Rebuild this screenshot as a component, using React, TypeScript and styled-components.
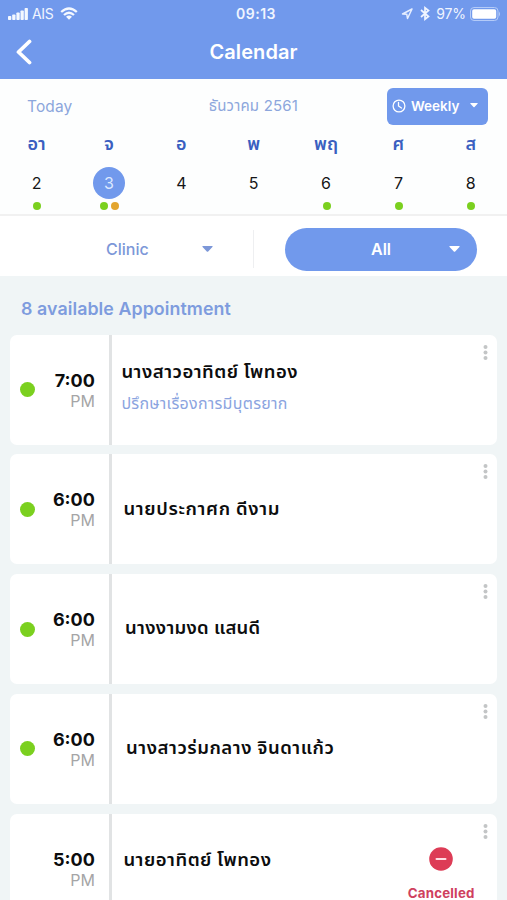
import React from "react";
import styled, { createGlobalStyle } from "styled-components";

const blue = "#7199ec";
const green = "#7bd01f";
const sans = `Inter, "Noto Sans Thai", "Noto Sans", sans-serif`;

const GlobalStyle = createGlobalStyle`
  * { box-sizing: border-box; }
  body { margin: 0; background: #f0f5f6; }
`;

const Screen = styled.div`
  width: 507px;
  height: 900px;
  overflow: hidden;
  background: #f0f5f6;
  font-family: ${sans};
  color: #0c0d0e;
`;

const Header = styled.header`
  height: 79px;
  background: ${blue};
  color: #fff;
`;

const StatusBar = styled.div`
  height: 27px;
  display: grid;
  grid-template-columns: 1fr auto 1fr;
  align-items: center;
  padding: 0 6px 0 8px;
  font-size: 14px;
  line-height: 27px;
  color: #f0f5ff;
`;

const StatusGroup = styled.div<{ $end?: boolean }>`
  display: flex;
  align-items: center;
  justify-content: ${(p) => (p.$end ? "flex-end" : "flex-start")};
`;

const Carrier = styled.span`
  margin: 0 6px 0 4px;
  letter-spacing: -0.3px;
`;

const Clock = styled.span`
  font-weight: 600;
  letter-spacing: 0.5px;
  margin-left: 3px;
`;

const Battery = styled.span`
  margin: 0 4px 0 6px;
  letter-spacing: -0.1px;
`;

const BluetoothSlot = styled.span`
  display: flex;
  margin-left: 7px;
`;

const TitleBar = styled.div`
  height: 52px;
  display: grid;
  grid-template-columns: 60px 1fr 60px;
  align-items: center;
  padding: 0 0 2px;
`;

const BackButton = styled.button`
  border: 0;
  background: none;
  padding: 0 0 0 15px;
  display: flex;
`;

const Title = styled.h1`
  margin: 0;
  text-align: center;
  font-size: 20px;
  line-height: 28px;
  font-weight: 600;
  letter-spacing: 0.1px;
`;

const Calendar = styled.section`
  height: 137px;
  background: #fdfefe;
  border-bottom: 2px solid #f1f1f1;
`;

const MonthBar = styled.div`
  height: 54px;
  display: grid;
  grid-template-columns: 1fr auto 1fr;
  align-items: center;
  padding: 0 19px 0 27px;
  color: #8ca6dc;
  font-size: 15.5px;
`;

const Today = styled.span`
  letter-spacing: 0.1px;
`;

const Month = styled.span`
  font-size: 15px;
  letter-spacing: 0.2px;
  margin-left: -8px;
`;

const RangeButton = styled.button`
  justify-self: end;
  width: 101px;
  height: 37px;
  border: 0;
  border-radius: 6px;
  background: ${blue};
  color: #fff;
  display: flex;
  align-items: center;
  padding: 0 10px 1px 5px;
  font: 600 13.5px ${sans};
`;

const RangeLabel = styled.span`
  flex: 1;
  padding-left: 5px;
  text-align: left;
  white-space: nowrap;
`;

const Week = styled.div`
  display: grid;
  grid-template-columns: repeat(7, 1fr);
  padding-left: 0.4px;
`;

const Day = styled.div`
  display: flex;
  flex-direction: column;
  align-items: center;
`;

const DayName = styled.span`
  height: 26px;
  line-height: 22px;
  font-size: 18px;
  font-weight: 600;
  color: #3a5fc0;
`;

const DayNumber = styled.span<{ $active?: boolean }>`
  width: 32px;
  height: 32px;
  margin-top: 8px;
  border-radius: 50%;
  text-align: center;
  font-size: 16px;
  line-height: 33px;
  background: ${(p) => (p.$active ? blue : "transparent")};
  color: ${(p) => (p.$active ? "#dce8ff" : "#151617")};
`;

const Dots = styled.div`
  display: flex;
  gap: 3px;
  margin: 3px 0 0 1px;
`;

const Dot = styled.i<{ $color: string }>`
  width: 8px;
  height: 8px;
  border-radius: 50%;
  background: ${(p) => p.$color};
`;

const Filters = styled.section`
  height: 60px;
  display: grid;
  grid-template-columns: 254px 1fr;
  align-items: center;
  background: #fff;
`;

const ClinicSelect = styled.div`
  height: 38px;
  margin-top: 6px;
  border-right: 1px solid #eeeff1;
  display: flex;
  align-items: center;
  justify-content: space-between;
  padding: 0 40px 0 106px;
  color: #7c97d8;
  font-size: 16px;
  font-weight: 500;
`;

const AllSelect = styled.div`
  width: 192px;
  height: 43px;
  margin-left: 31px;
  margin-top: 6px;
  border-radius: 22px;
  background: ${blue};
  color: #fff;
  display: grid;
  grid-template-columns: 1fr auto 1fr;
  align-items: center;
  padding: 0 17px;
  font-size: 16px;
  font-weight: 600;
`;

const FilterLabel = styled.span`
  grid-column: 2;
`;

const CaretSlot = styled.span`
  display: flex;
  justify-self: end;
`;

const Summary = styled.h2`
  margin: 0;
  height: 58.5px;
  padding: 6px 0 0 21px;
  line-height: 53px;
  font-size: 17.8px;
  font-weight: 600;
  letter-spacing: 0.08px;
  color: #7e9cde;
`;

const List = styled.div`
  display: flex;
  flex-direction: column;
  gap: 9.8px;
  padding: 0 9.6px 0 10.4px;
`;

const Card = styled.article`
  flex: none;
  height: 110px;
  display: grid;
  grid-template-columns: 99px 3px 1fr 24px;
  border-radius: 7px;
  background: #fff;
`;

const TimeCell = styled.div`
  display: grid;
  grid-template-columns: 15px 1fr;
  align-items: center;
  padding: 0 14.5px 0 9.8px;
`;

const StatusDot = styled.i<{ $visible: boolean }>`
  width: 15px;
  height: 15px;
  border-radius: 50%;
  background: ${(p) => (p.$visible ? green : "transparent")};
`;

const Time = styled.div`
  padding-top: 3px;
  text-align: right;
  font-size: 18px;
  line-height: 20px;
  font-weight: 700;
`;

const Meridiem = styled.div`
  font-size: 16px;
  line-height: 21px;
  font-weight: 400;
  color: #a5a5a6;
`;

const Divider = styled.div`
  background: #e1e3e4;
`;

const Details = styled.div<{ $indent: number; $top: number }>`
  padding: ${(p) => p.$top}px 0 0 ${(p) => p.$indent}px;
  white-space: nowrap;
`;

const PatientName = styled.div<{ $spacing: number }>`
  font-size: 18.5px;
  line-height: 32px;
  font-weight: 600;
  letter-spacing: ${(p) => p.$spacing}px;
`;

const Reason = styled.div`
  font-size: 16px;
  line-height: 32px;
  letter-spacing: 0.28px;
  color: #8ba4df;
`;

const Body = styled.div`
  display: flex;
  justify-content: space-between;
`;

const Cancelled = styled.div`
  display: flex;
  flex-direction: column;
  align-items: center;
  padding-top: 33px;
  margin-right: -1.2px;
  color: #cf405e;
  font-size: 13.3px;
  line-height: 12px;
  font-weight: 700;
  letter-spacing: 0.2px;
`;

const CancelledLabel = styled.span`
  margin-top: 16.5px;
`;

const MoreButton = styled.button`
  border: 0;
  background: none;
  padding: 10px 0 0 10px;
  display: flex;
  align-items: flex-start;
`;

const Caret = ({ w = 11, h = 6 }: { w?: number; h?: number }) => (
  <svg width={w} height={h} viewBox="0 0 11 6" fill="currentColor">
    <path d="M1 0h9q1.200.2.4 1L6.200 5.500q-.7.600-1.400 0L.6 1Q-.2 0 1 0z" />
  </svg>
);

const Signal = () => (
  <svg width="20" height="12" viewBox="0 0 20 12" fill="#f4f8ff">
    <rect x="0" y="8" width="3.300" height="4" rx="0.8" />
    <rect x="4.200" y="6.500" width="3.300" height="5.500" rx="0.8" />
    <rect x="8.400" y="4.500" width="3.300" height="7.500" rx="0.8" />
    <rect x="12.500" y="2.500" width="3.300" height="9.500" rx="0.8" />
    <rect x="16.600" y="0" width="3.300" height="12" rx="0.8" />
  </svg>
);

const Wifi = () => (
  <svg width="18" height="13" viewBox="0 0 18 13" fill="none" stroke="#f4f8ff" strokeWidth="2.300">
    <path d="M1.200 5Q9-2 16.800 5" />
    <path d="M4 8Q9 3.400 14 8" />
    <path d="M6 9.800Q9 7.300 12 9.800L9 12.800z" fill="#f4f8ff" stroke="none" />
  </svg>
);

const Location = () => (
  <svg width="12" height="12" viewBox="0 0 12 12" fill="none" stroke="#e6eeff" strokeWidth="1.500" strokeLinejoin="round">
    <path d="M11 1L1.500 6l4.300.3L6.500 10.500z" />
  </svg>
);

const Bluetooth = () => (
  <svg width="10" height="15" viewBox="0 0 10 15" fill="none" stroke="#f0f5ff" strokeWidth="1.700">
    <path d="M1 4l7.500 6.500L5 13.200V1.800l3.500 2.700L1 11" />
  </svg>
);

const BatteryIcon = () => (
  <svg width="31" height="14" viewBox="0 0 31 14">
    <rect x="0.500" y="0.500" width="27.500" height="13" rx="3.500" fill="none" stroke="#b4cbf8" />
    <rect x="2.200" y="2.200" width="24" height="9.600" rx="1.800" fill="#fff" />
    <path d="M29 4.500q2 2.500 0 5z" fill="#b4cbf8" />
  </svg>
);

const days = [
  { name: "อา", number: 2, dots: [green] },
  { name: "จ", number: 3, dots: [green, "#e3a52e"], active: true },
  { name: "อ", number: 4, dots: [] },
  { name: "พ", number: 5, dots: [] },
  { name: "พฤ", number: 6, dots: [green] },
  { name: "ศ", number: 7, dots: [green] },
  { name: "ส", number: 8, dots: [green] },
];

const appointments = [
  { time: "7:00", name: "นางสาวอาทิตย์ โพทอง", reason: "ปรึกษาเรื่องการมีบุตรยาก", indent: 9, top: 20.7, spacing: 0.5 },
  { time: "6:00", name: "นายประกาศก ดีงาม", indent: 11, top: 38, spacing: 0.65 },
  { time: "6:00", name: "นางงามงด แสนดี", indent: 12.7, top: 37, spacing: 0.27 },
  { time: "6:00", name: "นางสาวร่มกลาง จินดาแก้ว", indent: 13.7, top: 36.7, spacing: 0.53 },
  { time: "5:00", name: "นายอาทิตย์ โพทอง", indent: 11, top: 29.5, spacing: 0.5, cancelled: true },
];

export default function App() {
  return (
    <>
      <GlobalStyle />
      <Screen>
        <Header>
          <StatusBar>
            <StatusGroup>
              <Signal />
              <Carrier>AIS</Carrier>
              <Wifi />
            </StatusGroup>
            <Clock>09:13</Clock>
            <StatusGroup $end>
              <Location />
              <BluetoothSlot>
                <Bluetooth />
              </BluetoothSlot>
              <Battery>97%</Battery>
              <BatteryIcon />
            </StatusGroup>
          </StatusBar>
          <TitleBar>
            <BackButton aria-label="Back">
              <svg width="18" height="26" viewBox="0 0 18 26" fill="none" stroke="#fff" strokeWidth="3.800" strokeLinecap="round" strokeLinejoin="round">
                <path d="M14.500 2.500L3.500 13l11 10.500" />
              </svg>
            </BackButton>
            <Title>Calendar</Title>
          </TitleBar>
        </Header>
        <Calendar>
          <MonthBar>
            <Today>Today</Today>
            <Month>ธันวาคม 2561</Month>
            <RangeButton>
              <svg width="14" height="14" viewBox="0 0 14 14" fill="none" stroke="#fff" strokeWidth="1.300" strokeLinecap="round">
                <circle cx="7" cy="7" r="5.900" />
                <path d="M6.500 3.500V7l3 2" />
              </svg>
              <RangeLabel>Weekly</RangeLabel>
              <Caret w={8} h={4.5} />
            </RangeButton>
          </MonthBar>
          <Week>
            {days.map((d) => (
              <Day key={d.number}>
                <DayName>{d.name}</DayName>
                <DayNumber $active={d.active}>{d.number}</DayNumber>
                <Dots>
                  {d.dots.map((c) => (
                    <Dot key={c} $color={c} />
                  ))}
                </Dots>
              </Day>
            ))}
          </Week>
        </Calendar>
        <Filters>
          <ClinicSelect>
            Clinic
            <Caret />
          </ClinicSelect>
          <AllSelect>
            <FilterLabel>All</FilterLabel>
            <CaretSlot>
              <Caret />
            </CaretSlot>
          </AllSelect>
        </Filters>
        <Summary>8 available Appointment</Summary>
        <List>
          {appointments.map((a, i) => (
            <Card key={i}>
              <TimeCell>
                <StatusDot $visible={!a.cancelled} />
                <Time>
                  {a.time}
                  <Meridiem>PM</Meridiem>
                </Time>
              </TimeCell>
              <Divider />
              <Body>
                <Details $indent={a.indent} $top={a.top}>
                  <PatientName $spacing={a.spacing}>{a.name}</PatientName>
                  {a.reason && <Reason>{a.reason}</Reason>}
                </Details>
                {a.cancelled && (
                  <Cancelled>
                    <svg width="24" height="24" viewBox="0 0 24 24">
                      <circle cx="12" cy="12" r="11.800" fill="#dd3c56" />
                      <path d="M7.500 12h9" stroke="#ffdfe5" strokeWidth="2" strokeLinecap="round" />
                    </svg>
                    <CancelledLabel>Cancelled</CancelledLabel>
                  </Cancelled>
                )}
              </Body>
              <MoreButton aria-label="More">
                <svg width="5" height="15" viewBox="0 0 5 15" fill="#c3c5c6">
                  <circle cx="2.500" cy="2" r="2" />
                  <circle cx="2.500" cy="7.500" r="2" />
                  <circle cx="2.500" cy="13" r="2" />
                </svg>
              </MoreButton>
            </Card>
          ))}
        </List>
      </Screen>
    </>
  );
}
